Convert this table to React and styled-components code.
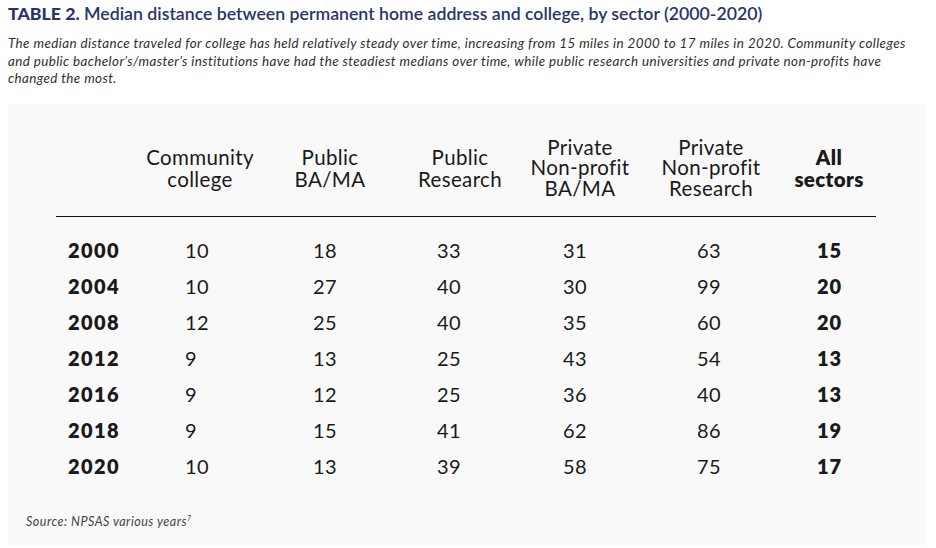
import React from 'react';
import styled, { createGlobalStyle } from 'styled-components';

const GlobalStyle = createGlobalStyle`
  body {
    margin: 0;
    background: #ffffff;
    font-family: Lato, "Open Sans", sans-serif;
  }
`;

const Page = styled.div`
  width: 936px;
  height: 548px;
  overflow: hidden;
  padding: 3px 0 0 8px;
  box-sizing: border-box;
`;

const Title = styled.h1`
  margin: 0;
  font-size: 17.7px;
  line-height: 22px;
  font-weight: 600;
  color: #29356a;
  b {
    font-weight: 900;
  }
`;

const Lead = styled.p`
  margin: 10px 0 0;
  width: 915px;
  font-size: 13.4px;
  line-height: 17.5px;
  letter-spacing: 0.4px;
  font-style: italic;
  color: #2e2e2e;
`;

const Panel = styled.section`
  margin-top: 16px;
  width: 917px;
  height: 441px;
  background: #f9f9f9;
  padding: 16px 0 0 18px;
  box-sizing: border-box;
  color: #1a1a1a;
`;

const COLS = '84px 120px 140px 120px 120px 142px 94px';

const HeadRow = styled.div`
  margin-left: 30px;
  width: 820px;
  height: 96px;
  display: grid;
  grid-template-columns: ${COLS};
  align-items: center;
  border-bottom: 1.5px solid #111;
`;

const HeadCell = styled.div`
  text-align: center;
  font-size: 20.5px;
  line-height: ${(p) => (p.$lines > 2 ? '20.5px' : '22px')};
  letter-spacing: 0.35px;
  font-weight: ${(p) => (p.$strong ? 800 : 400)};
`;

const Body = styled.div`
  margin-left: 30px;
  width: 820px;
  padding-top: 15px;
`;

const Row = styled.div`
  display: grid;
  grid-template-columns: ${COLS};
  height: 36px;
  align-items: center;
  font-size: 20px;
`;

const Year = styled.div`
  padding-left: 12px;
  font-weight: 800;
  letter-spacing: 1.4px;
`;

const Cell = styled.div`
  padding-left: ${(p) => p.$indent}px;
  font-weight: ${(p) => (p.$strong ? 800 : 400)};
  letter-spacing: ${(p) => (p.$strong ? '1px' : '0.3px')};
`;

const Source = styled.p`
  margin: 26px 0 0;
  font-size: 12.5px;
  line-height: 16px;
  letter-spacing: 0.5px;
  font-style: italic;
  color: #444;
  sup {
    font-size: 7px;
  }
`;

const headers = [
  ['Community', 'college'],
  ['Public', 'BA/MA'],
  ['Public', 'Research'],
  ['Private', 'Non-profit', 'BA/MA'],
  ['Private', 'Non-profit', 'Research'],
  ['All', 'sectors'],
];

const indents = [45, 53, 37, 43, 57, 35];

const rows = [
  ['2000', 10, 18, 33, 31, 63, 15],
  ['2004', 10, 27, 40, 30, 99, 20],
  ['2008', 12, 25, 40, 35, 60, 20],
  ['2012', 9, 13, 25, 43, 54, 13],
  ['2016', 9, 12, 25, 36, 40, 13],
  ['2018', 9, 15, 41, 62, 86, 19],
  ['2020', 10, 13, 39, 58, 75, 17],
];

const App = () => {
  return (
    <Page>
      <GlobalStyle />
      <Title>
        <b>TABLE 2.</b> Median distance between permanent home address and college, by sector (2000-2020)
      </Title>
      <Lead>
        The median distance traveled for college has held relatively steady over time, increasing from 15 miles in 2000 to 17 miles in 2020. Community colleges and public bachelor’s/master’s institutions have had the steadiest medians over time, while public research universities and private non-profits have changed the most.
      </Lead>
      <Panel>
        <HeadRow>
          <div />
          {headers.map((lines, i) => (
            <HeadCell key={i} $strong={i === 5} $lines={lines.length}>
              {lines.map((l, j) => (
                <div key={j}>{l}</div>
              ))}
            </HeadCell>
          ))}
        </HeadRow>
        <Body>
          {rows.map(([year, ...vals]) => (
            <Row key={year}>
              <Year>{year}</Year>
              {vals.map((v, i) => (
                <Cell key={i} $indent={indents[i]} $strong={i === 5}>
                  {v}
                </Cell>
              ))}
            </Row>
          ))}
        </Body>
        <Source>
          Source: NPSAS various years<sup>7</sup>
        </Source>
      </Panel>
    </Page>
  );
};

export default App;
